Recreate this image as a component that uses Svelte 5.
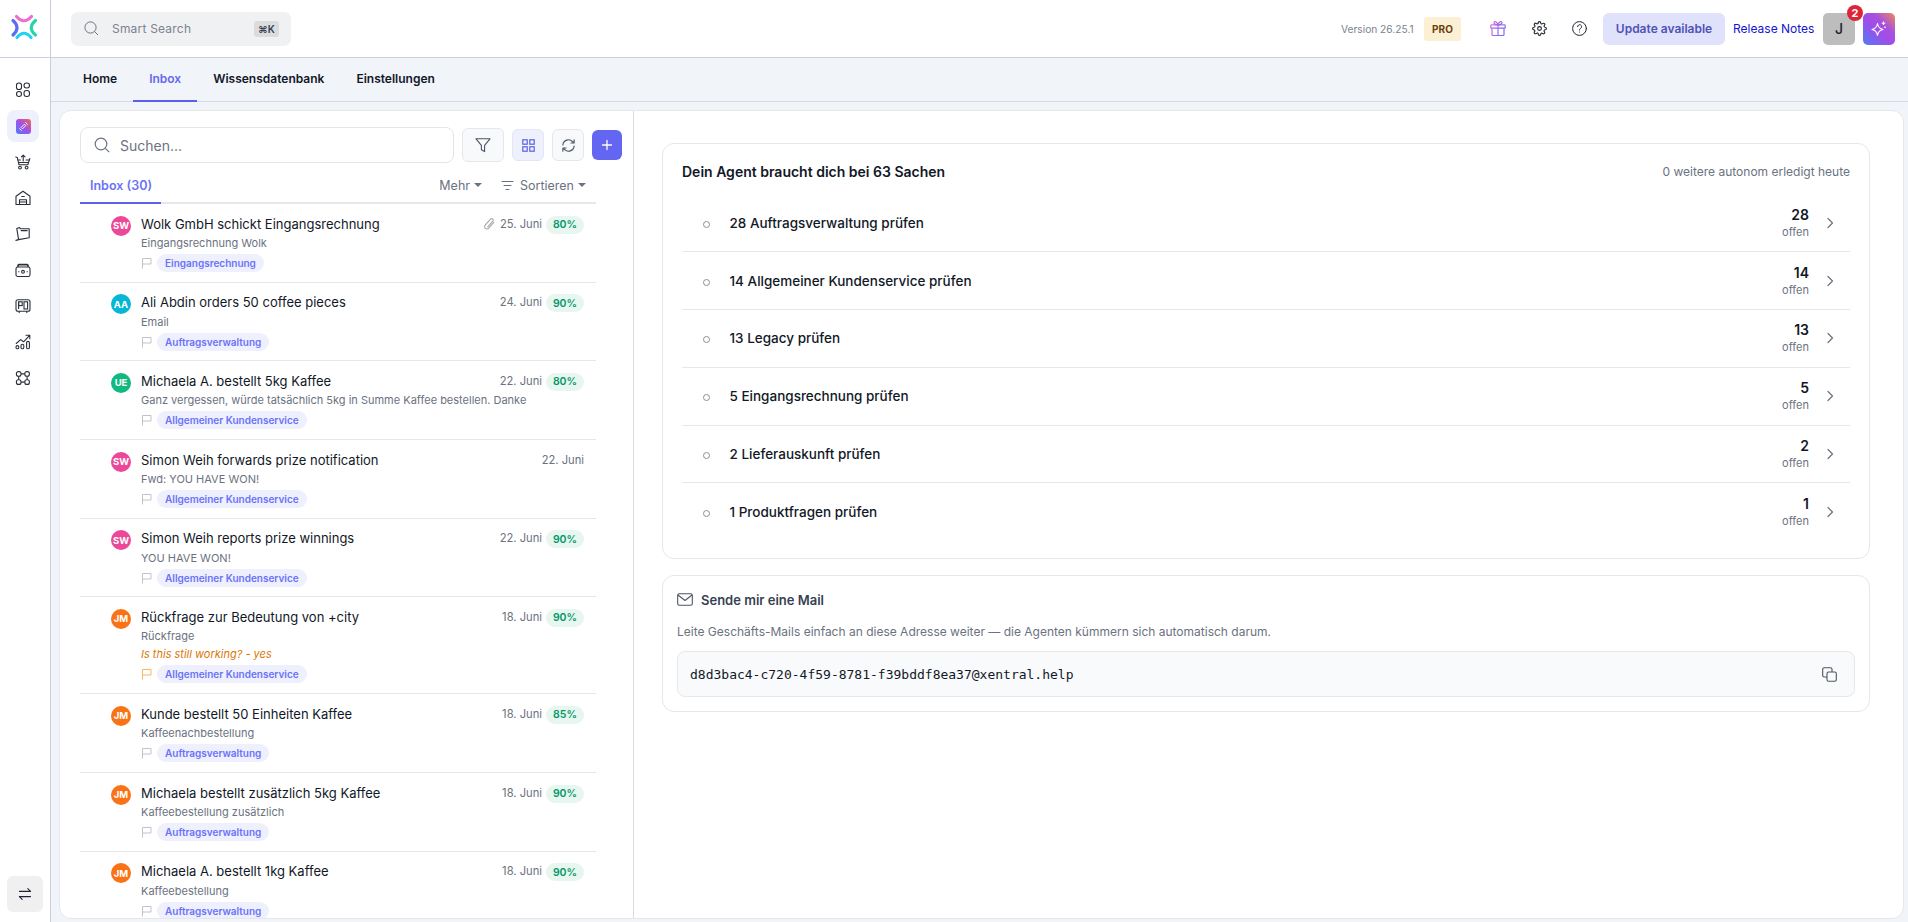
<script>
  const navIcons = ['apps','agent','cart','store','box','wallet','pos','chart','nodes'];
  const rows = [
    { i:'SW', c:'#ec4899', t:'Wolk GmbH schickt Eingangsrechnung', s:'Eingangsrechnung Wolk', d:'25. Juni', p:'80%', tag:'Eingangsrechnung', clip:true },
    { i:'AA', c:'#06b6d4', t:'Ali Abdin orders 50 coffee pieces', s:'Email', d:'24. Juni', p:'90%', tag:'Auftragsverwaltung' },
    { i:'UE', c:'#10b981', t:'Michaela A. bestellt 5kg Kaffee', s:'Ganz vergessen, würde tatsächlich 5kg in Summe Kaffee bestellen. Danke', d:'22. Juni', p:'80%', tag:'Allgemeiner Kundenservice' },
    { i:'SW', c:'#ec4899', t:'Simon Weih forwards prize notification', s:'Fwd: YOU HAVE WON!', d:'22. Juni', tag:'Allgemeiner Kundenservice' },
    { i:'SW', c:'#ec4899', t:'Simon Weih reports prize winnings', s:'YOU HAVE WON!', d:'22. Juni', p:'90%', tag:'Allgemeiner Kundenservice' },
    { i:'JM', c:'#f97316', t:'Rückfrage zur Bedeutung von +city', s:'Rückfrage', n:'Is this still working? - yes', d:'18. Juni', p:'90%', tag:'Allgemeiner Kundenservice', flag:true },
    { i:'JM', c:'#f97316', t:'Kunde bestellt 50 Einheiten Kaffee', s:'Kaffeenachbestellung', d:'18. Juni', p:'85%', tag:'Auftragsverwaltung' },
    { i:'JM', c:'#f97316', t:'Michaela bestellt zusätzlich 5kg Kaffee', s:'Kaffeebestellung zusätzlich', d:'18. Juni', p:'90%', tag:'Auftragsverwaltung' },
    { i:'JM', c:'#f97316', t:'Michaela A. bestellt 1kg Kaffee', s:'Kaffeebestellung', d:'18. Juni', p:'90%', tag:'Auftragsverwaltung' }
  ];
  const tasks = [
    ['28 Auftragsverwaltung prüfen', 28],
    ['14 Allgemeiner Kundenservice prüfen', 14],
    ['13 Legacy prüfen', 13],
    ['5 Eingangsrechnung prüfen', 5],
    ['2 Lieferauskunft prüfen', 2],
    ['1 Produktfragen prüfen', 1]
  ];
</script>

<svg width="0" height="0" class="defs">
  <defs>
    <linearGradient id="gift" x1="0" y1="0" x2="1" y2="1"><stop offset="0" stop-color="#e36ad6"/><stop offset="1" stop-color="#6a6cf6"/></linearGradient>
  </defs>
</svg>

<div class="app">
  <aside class="side">
    <div class="logo">
      <svg width="28" height="28" viewBox="0 0 28 28" fill="none" stroke-width="3.2" stroke-linecap="round">
        <path d="M6.5 3.500 Q14 12 21.500 3.500" stroke="#ec6fd0"/>
        <path d="M3 7.500 Q11 14.500 3 22" stroke="#5b6cf5"/>
        <path d="M25.500 7.500 Q17 14.500 25.500 22" stroke="#25d5a6"/>
        <path d="M7 24.500 Q14 16 21 24.500" stroke="#22d3ee"/>
      </svg>
    </div>
    <nav class="nav">
      {#each navIcons as n}
        <div class="nav-item" class:active={n === 'agent'}>
          {#if n === 'apps'}
            <svg width="16" height="16" viewBox="0 0 16 16" fill="none" stroke="#2a2f3a" stroke-width="1.1"><rect x="1.5" y="1" width="5" height="6.5" rx="2.3"/><rect x="9" y="1" width="5.5" height="5" rx="2.5"/><rect x="1.5" y="9.5" width="5" height="5" rx="2.5"/><rect x="9" y="8.5" width="5.5" height="6" rx="2.4"/></svg>
          {:else if n === 'agent'}
            <span class="agent-ico"><svg width="11" height="11" viewBox="0 0 12 12" fill="none" stroke="#fff" stroke-width="1"><path d="M7 3.500 8.500 5 5 8.500 3.500 7Z"/><path d="M8 1.500l2.500 2.500M1.500 8 4 10.500"/></svg></span>
          {:else if n === 'cart'}
            <svg width="16" height="16" viewBox="0 0 16 16" fill="none" stroke="#2a2f3a" stroke-width="1.1" stroke-linecap="round" stroke-linejoin="round"><path d="M.8 3 2.3 3.6 4 10.8h8.8L14.8 4.500"/><path d="M8.2 7V1.2M6.4 2.9 8.2 1.1 10 2.9"/><path d="M3.4 6h2M11 6h3.3M3.8 8.5h9.6"/><circle cx="5" cy="13.6" r="1.4"/><circle cx="11.6" cy="13.6" r="1.4"/></svg>
          {:else if n === 'store'}
            <svg width="16" height="16" viewBox="0 0 16 16" fill="none" stroke="#2a2f3a" stroke-width="1.1" stroke-linejoin="round"><path d="M1 14.500V6.200L8 1.200l7 5v8.300z"/><path d="M4.500 14.500V9.800h7v4.700M6.300 6.500h3.400M4.500 12h7"/></svg>
          {:else if n === 'box'}
            <svg width="16" height="16" viewBox="0 0 16 16" fill="none" stroke="#2a2f3a" stroke-width="1.1" stroke-linecap="round" stroke-linejoin="round"><path d="M4.600 1.500 1.800 2.600l1.800 11 10.600-1.900V2.800H5.200z"/><path d="M6.200 4.600h6"/><path d="M3.600 13.600.9 14.400"/></svg>
          {:else if n === 'wallet'}
            <svg width="16" height="16" viewBox="0 0 16 16" fill="none" stroke="#2a2f3a" stroke-width="1.1"><rect x="1" y="5" width="14" height="9.500" rx="1.800"/><path d="M3 5V3.600q0-1 1-1h8q1 0 1 1V5" stroke-width="1.600"/><circle cx="8" cy="9.800" r="1.400"/><path d="M3.200 9.800h1.200M11.600 9.800h1.200"/></svg>
          {:else if n === 'pos'}
            <svg width="16" height="16" viewBox="0 0 16 16" fill="none" stroke="#2a2f3a" stroke-width="1.1"><rect x="1" y="1.800" width="14" height="11.400" rx="2"/><rect x="3.600" y="3.800" width="3.600" height="3.800"/><rect x="9" y="3.800" width="3.600" height="7.200"/><path d="M3.600 3.800v7.200M4.500 13.200 4 15M11.500 13.200 12 15"/></svg>
          {:else if n === 'chart'}
            <svg width="16" height="16" viewBox="0 0 16 16" fill="none" stroke="#2a2f3a" stroke-width="1.1" stroke-linecap="round" stroke-linejoin="round"><path d="M1.200 9.500 5.600 5.600l3 2.200L14.600 1.400M11 1.200h3.800v3.600"/><rect x="1" y="11.600" width="2.800" height="3.200" rx="1.400"/><rect x="6" y="10.200" width="2.800" height="4.600" rx="1.400"/><rect x="11.600" y="7.400" width="2.800" height="7.400" rx="1.400"/></svg>
          {:else}
            <svg width="16" height="16" viewBox="0 0 16 16" fill="none" stroke="#2a2f3a" stroke-width="1.1"><rect x="1.400" y="1.600" width="4.600" height="4.600" rx="2"/><rect x="9.800" y="1.600" width="4.600" height="4.600" rx="2"/><rect x="1.400" y="9.800" width="4.600" height="4.600" rx="2"/><rect x="9.800" y="9.800" width="4.600" height="4.600" rx="2"/><path d="M6 3.900h3.800M6 12.100h3.800M3.700 6.200v3.600M12.100 6.200v3.600"/></svg>
          {/if}
        </div>
      {/each}
    </nav>
    <button class="swap" aria-label="Wechseln">
      <svg width="14" height="14" viewBox="0 0 14 14" fill="none" stroke="#1f2430" stroke-width="1.1" stroke-linecap="round" stroke-linejoin="round"><path d="M1.500 4.400h11M9.800 1.600l2.800 2.800"/><path d="M12.500 9.600h-11M4.200 12.400 1.400 9.600"/></svg>
    </button>
  </aside>

  <div class="main">
    <header class="top">
      <div class="smart">
        <svg width="15" height="15" viewBox="0 0 15 15" fill="none" stroke="#6b7280" stroke-width="1"><circle cx="6.500" cy="6.500" r="5.600"/><path d="m10.600 10.600 3.400 3.400"/></svg>
        <span class="smart-t">Smart Search</span>
        <kbd>⌘K</kbd>
      </div>
      <div class="top-r">
        <span class="ver">Version 26.25.1</span>
        <span class="pro">PRO</span>
        <span class="ti gift"><svg width="16" height="17" viewBox="0 0 16 17" fill="none" stroke="url(#gift)" stroke-width="1.2" stroke-linejoin="round"><rect x=".8" y="4.800" width="14.400" height="3.400" rx=".8"/><path d="M2 8.200v6.300q0 1 1 1h10q1 0 1-1V8.200M8 4.800v10.700"/><path d="M8 4.800C6 4.800 4 4 4 2.600 4 1 6.800.8 8 4.800c1.200-4 4-3.800 4-2.200 0 1.400-2 2.200-4 2.200Z"/></svg></span>
        <span class="ti gear"><svg width="15" height="15" viewBox="0 0 24 24" fill="none" stroke="#1f2430" stroke-width="1.800" stroke-linecap="round" stroke-linejoin="round"><circle cx="12" cy="12" r="3"/><path d="M19.400 15a1.700 1.700 0 0 0 .3 1.800l.1.1a2 2 0 1 1-2.900 2.900l-.1-.1a1.700 1.700 0 0 0-2.800 1.200V21a2 2 0 1 1-4 0v-.1a1.700 1.700 0 0 0-2.900-1.200l-.1.1a2 2 0 1 1-2.900-2.900l.1-.1a1.700 1.700 0 0 0-1.200-2.800H3a2 2 0 1 1 0-4h.1a1.700 1.700 0 0 0 1.200-2.900l-.1-.1a2 2 0 1 1 2.900-2.900l.1.1a1.700 1.700 0 0 0 1.800.3H9a1.700 1.700 0 0 0 1-1.500V3a2 2 0 1 1 4 0v.1a1.700 1.700 0 0 0 2.900 1.200l.1-.1a2 2 0 1 1 2.900 2.900l-.1.1a1.700 1.700 0 0 0-.3 1.800V9a1.700 1.700 0 0 0 1.500 1H21a2 2 0 1 1 0 4h-.1a1.700 1.700 0 0 0-1.500 1Z"/></svg></span>
        <span class="ti help"><svg width="15" height="15" viewBox="0 0 15 15" fill="none" stroke="#1f2430" stroke-width="1" stroke-linecap="round"><circle cx="7.500" cy="7.500" r="6.900"/><path d="M5.600 5.600a2 2 0 1 1 3 1.800c-.7.4-1.100.8-1.100 1.600"/><path d="M7.500 11v.1"/></svg></span>
        <button class="upd">Update available</button>
        <span class="rel">Release Notes</span>
        <span class="user">J<span class="bubble">2</span></span>
        <span class="spark"><svg width="18" height="18" viewBox="0 0 18 18" fill="none" stroke="#fff" stroke-width="1.1" stroke-linejoin="round"><path d="M7.500 3.500c.6 3.800 2 5.300 5.500 6-3.500.7-4.900 2.200-5.500 6-.6-3.800-2-5.300-5.500-6 3.500-.7 4.900-2.200 5.500-6Z"/><path d="M13.500 1.500v3.600M11.700 3.300h3.600M15 6.500v1.600M14.200 7.300h1.600"/></svg></span>
      </div>
    </header>

    <div class="tabs">
      <span class="tab">Home</span>
      <span class="tab on">Inbox</span>
      <span class="tab">Wissensdatenbank</span>
      <span class="tab">Einstellungen</span>
    </div>

    <div class="body">
      <section class="shell">
        <div class="left">
          <div class="tools">
            <div class="search">
              <svg width="16" height="16" viewBox="0 0 16 16" fill="none" stroke="#6b7280" stroke-width="1.2"><circle cx="7" cy="7" r="5.800"/><path d="m11.300 11.300 3.900 3.900"/></svg>
              <span>Suchen...</span>
            </div>
            <button class="tb filter" aria-label="Filter"><svg width="16" height="16" viewBox="0 0 16 16" fill="none" stroke="#4b5563" stroke-width="1.1" stroke-linejoin="round"><path d="M1 1.800h14L9.600 8.400v6.200L6.400 12.800V8.400z"/></svg></button>
            <button class="tb grid" aria-label="Raster"><svg width="13" height="13" viewBox="0 0 13 13" fill="none" stroke="#5b5fe0" stroke-width="1.2"><rect x=".8" y=".8" width="4.400" height="4.400"/><rect x="7.800" y=".8" width="4.400" height="4.400"/><rect x=".8" y="7.800" width="4.400" height="4.400"/><rect x="7.800" y="7.800" width="4.400" height="4.400"/></svg></button>
            <button class="tb refresh" aria-label="Aktualisieren"><svg width="15" height="15" viewBox="0 0 24 24" fill="none" stroke="#4b5563" stroke-width="1.800" stroke-linecap="round" stroke-linejoin="round"><path d="M3 11a9 9 0 0 1 15.500-5.200L21 8M21 3v5h-5"/><path d="M21 13a9 9 0 0 1-15.500 5.200L3 16M3 21v-5h5"/></svg></button>
            <button class="tb plus" aria-label="Neu"><svg width="12" height="12" viewBox="0 0 12 12" stroke="#fff" stroke-width="1.3" stroke-linecap="round"><path d="M6 1.500v9M1.500 6h9"/></svg></button>
          </div>

          <div class="subtabs">
            <span class="ib">Inbox (30)</span>
            <span class="more">Mehr<i class="caret"></i></span>
            <span class="sort">
              <svg width="13" height="11" viewBox="0 0 13 11" stroke="#6b7280" stroke-width="1" stroke-linecap="round"><path d="M1 1.500h11M3 5.500h7M5 9.500h3"/></svg>
              Sortieren<i class="caret"></i>
            </span>
          </div>

          <div class="list">
            {#each rows as r}
              <article class="row">
                <span class="av" style="background:{r.c}">{r.i}</span>
                <div class="txt">
                  <div class="line1">
                    <span class="title">{r.t}</span>
                    {#if r.clip}
                      <svg class="clip" width="12" height="14" viewBox="0 0 12 14" fill="none" stroke="#a4a8b0" stroke-width="1.1" stroke-linecap="round"><path d="M10.800 5.400 5.700 11.200a2.300 2.300 0 0 1-3.500-3L7.500 2.100a1.500 1.500 0 0 1 2.300 2L4.700 9.800"/></svg>
                    {/if}
                    <span class="date">{r.d}</span>
                    {#if r.p}<span class="pct">{r.p}</span>{/if}
                  </div>
                  <div class="sub">{r.s}</div>
                  {#if r.n}<div class="note">{r.n}</div>{/if}
                  <div class="meta">
                    <svg width="11" height="12" viewBox="0 0 11 12" fill="none" stroke={r.flag ? '#f5b860' : '#c0c3ca'} stroke-width="1"><path d="M1.500 11.500V1.500h8.500v5.500H1.500"/></svg>
                    <span class="tag">{r.tag}</span>
                  </div>
                </div>
              </article>
            {/each}
          </div>
        </div>

        <div class="right">
          <div class="card agent">
            <div class="agent-h">
              <strong>Dein Agent braucht dich bei 63 Sachen</strong>
              <span>0 weitere autonom erledigt heute</span>
            </div>
            {#each tasks as t}
              <div class="task">
                <i class="dot"></i>
                <span class="task-t">{t[0]}</span>
                <span class="cnt"><b>{t[1]}</b><small>offen</small></span>
                <svg width="8" height="12" viewBox="0 0 8 12" fill="none" stroke="#6b7280" stroke-width="1.2" stroke-linecap="round" stroke-linejoin="round"><path d="m2 1.500 4.500 4.500L2 10.500"/></svg>
              </div>
            {/each}
          </div>

          <div class="card mail">
            <div class="mail-h">
              <svg width="16" height="13" viewBox="0 0 16 13" fill="none" stroke="#4b5563" stroke-width="1.1" stroke-linejoin="round"><rect x=".7" y=".7" width="14.600" height="11.600" rx="1.500"/><path d="m1 2 7 5.500L15 2"/></svg>
              <strong>Sende mir eine Mail</strong>
            </div>
            <p>Leite Geschäfts-Mails einfach an diese Adresse weiter — die Agenten kümmern sich automatisch darum.</p>
            <div class="addr">
              <code>d8d3bac4-c720-4f59-8781-f39bddf8ea37@xentral.help</code>
              <svg width="15" height="15" viewBox="0 0 15 15" fill="none" stroke="#4b5563" stroke-width="1.1"><rect x="5" y="5" width="9.300" height="9.300" rx="1.500"/><path d="M10 5V2.200Q10 .7 8.500.7H2.200Q.7.700.7 2.200v6.300Q.7 10 2.200 10H5"/></svg>
            </div>
          </div>
        </div>
      </section>
    </div>
  </div>
</div>

<style>
  :global(body) { margin: 0; background: #f1f4f9; font-family: Inter, "Liberation Sans", sans-serif; color: #111827; }
  .defs { position: absolute; }
  .app { display: flex; height: 922px; overflow: hidden; }
  .side { width: 50px; flex: none; background: #fff; border-right: 1px solid #c9cfdc; display: flex; flex-direction: column; }
  .logo { height: 57px; border-bottom: 1px solid #c9cfdc; flex: none; display: flex; justify-content: center; align-items: center; padding-right: 4px; box-sizing: content-box; margin-right: -1px; }
  .logo svg { margin-bottom: 3px; }
  .nav { display: flex; flex-direction: column; padding: 14px 0 0 7px; flex: 1; }
  .nav-item { width: 32px; height: 36px; display: flex; align-items: center; justify-content: center; border-radius: 8px; }
  .nav-item.active { background: #eef0fc; height: 32px; margin: 2px 0; }
  .agent-ico { width: 15px; height: 15px; border-radius: 3px; background: linear-gradient(45deg, #4f7cf5 5%, #a34fe8 50%, #f0694f 100%); display: flex; align-items: center; justify-content: center; }
  .swap { width: 36px; height: 36px; border: 0; padding: 0; margin: 0 0 10px 7px; background: #f0f0f0; border-radius: 6px; display: flex; align-items: center; justify-content: center; }
  .main { flex: 1; min-width: 0; display: flex; flex-direction: column; }
  .top { height: 57px; flex: none; background: #fff; border-bottom: 1px solid #c9cfdc; display: flex; align-items: center; padding: 0 13px 0 20px; justify-content: space-between; box-sizing: content-box; }
  .smart { width: 220px; height: 34px; box-sizing: border-box; background: #f0f1f3; border-radius: 7px; display: flex; align-items: center; padding: 0 12px 0 13px; }
  .smart-t { margin-left: 13px; font-size: 12px; color: #7b8290; flex: 1; letter-spacing: .2px; }
  kbd { width: 25px; height: 16px; background: #dcdcdc; border-radius: 3px; font: 600 10px Inter, sans-serif; color: #374151; display: flex; align-items: center; justify-content: center; }
  .top-r { display: flex; align-items: center; height: 32px; }
  .ver { font-size: 10.2px; color: #7b8290; width: 71px; white-space: nowrap; }
  .pro { margin-left: 12px; width: 37px; height: 24px; background: #fbf0d4; border-radius: 3px; color: #6b3f0c; font-size: 10px; font-weight: 700; display: flex; align-items: center; justify-content: center; }
  .ti { display: flex; align-items: center; }
  .gift { margin-left: 29px; }
  .gear { margin-left: 26px; }
  .help { margin-left: 25px; }
  .upd { margin-left: 16px; width: 122px; height: 32px; border: 0; border-radius: 6px; background: #e0e1fa; color: #4f52b8; font: 600 12px Inter, sans-serif; padding: 0; }
  .rel { margin-left: 8px; width: 82px; white-space: nowrap; color: #1414d2; font-size: 12px; font-weight: 400; }
  .user { margin-left: 8px; position: relative; width: 32px; height: 32px; background: #bdbdbd; border-radius: 5px; display: flex; align-items: center; justify-content: center; font-size: 14px; font-weight: 500; color: #1f2430; }
  .bubble { position: absolute; right: -8px; top: -8px; width: 16px; height: 16px; border-radius: 50%; background: #dc2638; color: #fff; font-size: 11px; font-weight: 700; display: flex; align-items: center; justify-content: center; }
  .spark { margin-left: 8px; width: 32px; height: 32px; border-radius: 5px; background: linear-gradient(45deg, #4f7cf5 0%, #9f4de8 45%, #a84fe0 65%, #ee8a55 100%); display: flex; align-items: center; justify-content: center; }
  .tabs { height: 43px; flex: none; border-bottom: 1px solid #d5dae4; padding-left: 16px; display: flex; }
  .tab { padding: 0 16px; font-size: 12px; font-weight: 600; line-height: 42px; color: #111827; height: 43px; box-sizing: border-box; }
  .tab.on { color: #6668f0; box-shadow: inset 0 -2px 0 #5b5ff0; height: 44px; }
  .body { flex: 1; min-height: 0; padding: 8px 4px 3px 8px; }
  .shell { height: 100%; box-sizing: border-box; background: #fff; border: 1px solid #e5e7eb; border-radius: 12px; display: flex; overflow: hidden; }
  .left { width: 574px; flex: none; box-sizing: border-box; border-right: 1px solid #d8dbe2; padding: 16px 0 0 20px; overflow: hidden; }
  .tools { display: flex; align-items: center; height: 36px; }
  .search { width: 374px; height: 36px; box-sizing: border-box; border: 1px solid #e3e5ea; border-radius: 8px; display: flex; align-items: center; padding-left: 13px; font-size: 14px; color: #6b7280; }
  .search span { margin-left: 10px; }
  .tb { padding: 0; border-radius: 6px; display: flex; align-items: center; justify-content: center; border: 1px solid #e5e7eb; background: #f8f9fb; }
  .filter { width: 42px; height: 34px; margin-left: 8px; }
  .grid { width: 32px; height: 32px; margin-left: 8px; background: #eef1fc; border-color: #e2e6f5; }
  .refresh { width: 32px; height: 32px; margin-left: 8px; }
  .plus { width: 30px; height: 30px; margin-left: 8px; background: #6366f1; border: 0; }
  .subtabs { width: 516px; height: 41px; box-sizing: border-box; border-bottom: 2px solid #e5e7eb; position: relative; display: flex; align-items: center; font-size: 12.5px; color: #6b7280; justify-content: flex-end; padding: 5px 10px 0 0; }
  .ib { position: absolute; left: 0; bottom: -2px; width: 81px; height: 41px; box-sizing: border-box; padding-left: 10px; line-height: 46px; color: #6b72f8; font-weight: 600; border-bottom: 2px solid #5b62f0; }
  .more { margin-right: 19px; display: flex; align-items: center; }
  .sort { display: flex; align-items: center; gap: 6px; }
  .caret { display: inline-block; width: 0; height: 0; border-left: 4px solid transparent; border-right: 4px solid transparent; border-top: 4px solid #6b7280; margin-left: 4px; }
  .sort .caret { margin-left: -2px; }
  .list { width: 516px; }
  .row { height: 78.7px; box-sizing: border-box; border-bottom: 1px solid #e5e7eb; padding: 9.5px 12px 0 31px; display: flex; gap: 10px; }
  .row:has(.note) { height: 97px; }
  .av { width: 20px; height: 20px; flex: none; margin-top: 2px; border-radius: 50%; color: #fff; font-size: 9.5px; font-weight: 700; display: flex; align-items: center; justify-content: center; }
  .txt { flex: 1; min-width: 0; }
  .line1 { display: flex; align-items: center; height: 20px; }
  .title { flex: 1; font-size: 13px; color: #111827; white-space: nowrap; }
  .clip { margin-right: 5px; }
  .date { font-size: 11.2px; color: #6b7280; }
  .pct { margin-left: 4px; width: 38px; height: 18px; margin-top: 2px; background: #e7f7f0; color: #059669; border-radius: 9px; font-size: 10.5px; font-weight: 600; display: flex; align-items: center; justify-content: center; }
  .sub { font-size: 11px; color: #6b7280; line-height: 16px; margin-top: 1.5px; white-space: nowrap; }
  .note { font-size: 11px; font-style: italic; color: #d97706; line-height: 16px; margin-top: 2px; }
  .meta { display: flex; align-items: center; gap: 5px; margin-top: 3px; height: 18px; }
  .tag { height: 18px; line-height: 18px; border-radius: 9px; background: #eef0fe; color: #6b72f8; font-size: 10px; font-weight: 600; padding: 0 8px; }
  .right { flex: 1; min-width: 0; padding: 32px 0 0 28px; }
  .card { width: 1208px; box-sizing: border-box; border: 1px solid #e5e7eb; border-radius: 12px; background: #fff; }
  .agent { height: 416px; padding: 0 19px; }
  .agent-h { height: 31.5px; padding-top: 19px; box-sizing: content-box; display: flex; justify-content: space-between; align-items: flex-start; }
  .agent-h strong { font-size: 14px; font-weight: 600; line-height: 17px; }
  .agent-h span { font-size: 12px; color: #6b7280; line-height: 17px; }
  .task { height: 57.8px; box-sizing: border-box; border-bottom: 1px solid #e5e7eb; display: flex; align-items: center; padding: 0 16px 0 21px; }
  .task:last-child { border-bottom: 0; }
  .dot { width: 7px; height: 7px; box-sizing: border-box; border: 1px solid #8a8f99; border-radius: 50%; margin-top: 3px; }
  .task-t { margin-left: 19.5px; flex: 1; font-size: 13.5px; font-weight: 500; }
  .cnt { display: flex; flex-direction: column; align-items: flex-end; margin-right: 17px; }
  .cnt b { font-size: 14px; font-weight: 600; line-height: 18px; }
  .cnt small { font-size: 11px; color: #6b7280; line-height: 16px; }
  .mail { margin-top: 16px; height: 137px; padding: 0 14px; }
  .mail-h { height: 25px; margin-top: 11px; display: flex; align-items: center; gap: 8px; padding-top: 0; }
  .mail-h strong { font-size: 13px; font-weight: 600; color: #374151; }
  .mail p { margin: 12px 0 0; font-size: 12px; line-height: 16px; color: #6b7280; }
  .addr { margin-top: 11px; height: 46px; box-sizing: border-box; background: #f9fafb; border: 1px solid #e5e7eb; border-radius: 8px; display: flex; align-items: center; justify-content: space-between; padding: 0 17px 0 12px; }
  code { font-family: "DejaVu Sans Mono", monospace; font-size: 13px; color: #111827; }
</style>
